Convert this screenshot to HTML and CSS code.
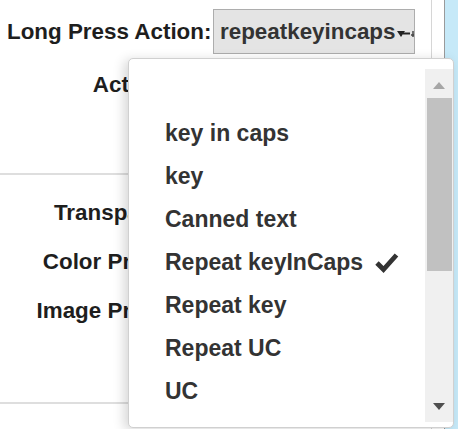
FILE: index.html
```html
<!DOCTYPE html>
<html lang="en">
<head>
<meta charset="utf-8">
<title>Key settings</title>
<link rel="stylesheet" href="styles.css">
</head>
<body>
<div class="window">
  <div class="main">
    <section class="group group-top">
      <div class="row row-select">
        <span class="label">Long Press Action:</span>
        <div class="select">
          <span class="select-value">repeatkeyincaps</span>
          <svg class="select-arrow" width="19" height="10" viewBox="0 0 19 10"><path d="M0 2 L8 2 L4 8 Z" fill="#222"/><path d="M6 4.5 H13" stroke="#222" stroke-width="2"/><path d="M16 2 L16 8 M14 6 H17" stroke="#444" stroke-width="1.5"/></svg>
        </div>
      </div>
      <div class="row row-second">
        <span class="label">Action Set:</span>
      </div>
    </section>
    <section class="group group-mid">
      <div class="row"><span class="label">Transparency:</span></div>
      <div class="row"><span class="label">Color Property:</span></div>
      <div class="row"><span class="label">Image Property:</span></div>
    </section>
    <section class="group group-bottom"></section>
  </div>
  <div class="gutter"></div>
  <div class="side"></div>

  <div class="menu">
    <ul class="menu-list">
      <li class="menu-item"></li>
      <li class="menu-item">key in caps</li>
      <li class="menu-item">key</li>
      <li class="menu-item">Canned text</li>
      <li class="menu-item is-selected">Repeat keyInCaps<svg class="check" width="24" height="21" viewBox="0 0 24 21"><path d="M2 11 L8.5 17.5 L21.5 3" fill="none" stroke="#333" stroke-width="4.8" stroke-linejoin="miter"/></svg></li>
      <li class="menu-item">Repeat key</li>
      <li class="menu-item">Repeat UC</li>
      <li class="menu-item">UC</li>
    </ul>
    <div class="scrollbar">
      <div class="sb-btn sb-up"><span class="tri-up"></span></div>
      <div class="sb-thumb"></div>
      <div class="sb-btn sb-down"><span class="tri-down"></span></div>
    </div>
  </div>
</div>
</body>
</html>
```
FILE: styles.css
```css
* { box-sizing: border-box; }
html, body { margin: 0; padding: 0; }
body {
  font-family: "Liberation Sans", Arial, sans-serif;
  background: #fff;
  overflow: hidden;
}
.window {
  position: relative;
  display: flex;
  height: 429px;
  width: 458px;
}
.main {
  width: 432px;
  border-right: 1px solid #d6d6d6;
  display: flex;
  flex-direction: column;
}
.gutter {
  width: 13px;
  border-right: 1px solid #9a9a9a;
}
.side {
  flex: 1;
  background: #c6e9f8;
}

.group {
  border-bottom: 2px solid #dedede;
}
.group-top {
  height: 175px;
  padding-top: 9px;
  --label-w: 204px;
}
.group-mid {
  height: 229px;
  padding-top: 13px;
  --label-w: 200px;
}
.group-bottom { border-bottom: none; flex: 1; }

.row {
  display: grid;
  grid-template-columns: var(--label-w) auto;
  align-items: center;
  height: 49px;
  padding-left: 7px;
}
.row-select { height: 45px; }
.row-second { height: 46px; margin-top: 8px; }

.label {
  text-align: right;
  font-size: 22.4px;
  font-weight: bold;
  color: #1e1e1e;
  white-space: nowrap;
}

.select {
  margin-left: 2px;
  width: 202px;
  height: 45px;
  background: #e4e4e4;
  border: 1px solid #adadad;
  display: flex;
  align-items: center;
  padding-left: 6px;
  overflow: hidden;
}
.select-value {
  font-size: 22.4px;
  font-weight: bold;
  color: #333;
  white-space: nowrap;
}
.select-arrow {
  margin-left: 1px;
  margin-top: 5px;
  flex: none;
}

.menu {
  position: absolute;
  left: 128px;
  top: 58px;
  width: 326px;
  height: 370px;
  background: #fff;
  border: 1px solid #d0d0d0;
  border-radius: 5px;
  box-shadow: -4px 2px 12px rgba(0, 0, 0, 0.16);
  display: flex;
}
.menu-list {
  flex: 1;
  list-style: none;
  margin: 0;
  padding: 10px 0 0 36px;
}
.menu-item {
  height: 43px;
  line-height: 43px;
  font-size: 23px;
  font-weight: bold;
  color: #333;
  white-space: nowrap;
  display: flex;
  align-items: center;
}
.check {
  margin-left: 12px;
  margin-top: -1px;
}

.scrollbar {
  width: 28px;
  margin: 10px 0 5px;
  background: #f0f0f0;
  display: flex;
  flex-direction: column;
}
.sb-btn {
  display: flex;
  justify-content: center;
}
.sb-up { height: 29px; padding-top: 13px; }
.sb-down { height: 30px; margin-top: auto; padding-top: 11px; }
.tri-up {
  width: 0; height: 0;
  border-left: 6px solid transparent;
  border-right: 6px solid transparent;
  border-bottom: 7px solid #a6a6a6;
}
.tri-down {
  width: 0; height: 0;
  border-left: 6px solid transparent;
  border-right: 6px solid transparent;
  border-top: 7px solid #4f4f4f;
}
.sb-thumb {
  height: 173px;
  margin: 0 1px 0 2px;
  background: #c1c1c1;
}
```
